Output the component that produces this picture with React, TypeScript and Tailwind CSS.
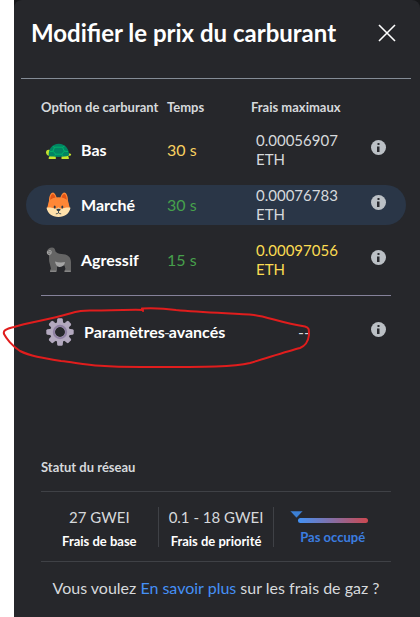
import React from 'react';

const Turtle = () => (
  <svg viewBox="0 0 26 26" className="h-[26px] w-[26px]" aria-hidden="true">
    <path d="M4 13C1.5 12 0 13.5 0 15.5c0 2.5 2 3.5 5 3.5l1-3z" fill="#c0e02f" />
    <path d="M22 16l3.2 1-.4 1.500-3.800.8z" fill="#c0e02f" />
    <path d="M3.500 18.500h6.300V22H3.300c-1 0-1-1.300 0-2zM15.500 18.500h6.500l.9 2.500c.2.6-.2 1-.9 1h-6.500z" fill="#c6e62d" />
    <path d="M2.800 19C2 12 6.500 6.700 12.800 6.700S23.500 12 23 18.500c-5 1.800-15 1.800-20.200.5z" fill="#018463" />
    <path d="M8.500 10.200h8l1.800 4-2.500 3H9.600L7 14.200zM8.500 10.200L6.800 9.500M16.500 10.200l2-1M7 14.200l-3.500.6M18.300 14.200l3.800.4M9.600 17.200l-.8 1.500M15.800 17.200l.8 1.500" fill="none" stroke="#00b36b" strokeWidth="1" />
  </svg>
);

const Fox = () => (
  <svg viewBox="0 0 26 26" className="h-[26px] w-[26px]" aria-hidden="true">
    <path d="M3 9C3 3.500 5 .5 7 .5c1.500 0 3 2.500 3.800 5.500h3.400C15 3 16.500.5 18.200.5c2 0 3.800 3 3.800 8.500l1.500 8H1.500z" fill="#ff8736" />
    <path d="M4.200 8c0-3 1.300-6 2.600-6S9.500 4.500 9.500 6zM20.800 8c0-3-1.200-6-2.600-6S15.500 4.500 15.500 6z" fill="#e45516" />
    <path d="M3 9.500C5 6.500 8 5.300 12.500 5.300S20 6.500 22 9.500l2 7H1z" fill="#ff8736" />
    <path d="M.5 15.800c3.300-.6 6.500.2 9.500 1l2.500-1.300 2.500 1.300c3-.8 6.200-1.600 9.500-1C23.500 21.500 19 25 12.500 25S1.500 21.500.5 15.800z" fill="#ffe1ab" />
    <ellipse cx="8.700" cy="15" rx="1" ry="1.500" fill="#2b3b47" />
    <ellipse cx="16.300" cy="15" rx="1" ry="1.500" fill="#2b3b47" />
    <path d="M10.500 17.200c1.300-.6 2.700-.6 4 0 .3 1-1.300 2-2 2s-2.300-1-2-2z" fill="#2b3b47" />
    <path d="M12.500 19v2M9.800 21.800c1 .1 2-.2 2.700-1 .7.800 1.700 1.100 2.700 1" fill="none" stroke="#2b3b47" strokeWidth=".8" />
  </svg>
);

const Gorilla = () => (
  <svg viewBox="0 0 26 26" className="h-[26px] w-[26px]" aria-hidden="true">
    <path d="M1 4C2 2 3.500.5 6 .5c2 0 3.200 1.500 3.500 4 1.500 1.200 3 2.500 6 2.500 6 0 9.500 3 9.500 8v10h-6.500v-1.500l1-1.500-1-3.500h-5.500l-2 1.500v3.500l-.5 1.500H4V23.500l1-2L3.300 15c-.6-3 .2-5-.5-7C1.300 7.700.1 6 1 4z" fill="#656565" />
    <path d="M1 4.500l3-1.800 1.700 1.500-.2 2.300-1.800 1.700C1.800 8.200.5 6.500 1 4.500z" fill="#a4a4a4" />
    <path d="M2 4.800h3M2.200 6.700h2" stroke="#656565" strokeWidth=".8" />
    <path d="M9 14.500c3 1.200 7 1.300 10 .6-.3 3-2.200 4.900-5 4.900s-4.500-2.500-5-5.500z" fill="#a4a4a4" />
    <path d="M4.500 23.500h5.500V25H4zM19 23.500h5.500V25h-6z" fill="#858585" />
  </svg>
);

const Gear = () => (
  <svg viewBox="-14 -14 28 28" className="h-7 w-7" aria-hidden="true">
    {[0, 45, 90, 135, 180, 225, 270, 315].map((angle) => (
      <path key={angle} transform={`rotate(${angle})`} d="M-3.200-8L-2.800-12.500q.2-1.200 1.200-1.200h3.200q1 0 1.200 1.200L3.200-8z" fill="#b3a9bf" />
    ))}
    <circle r="7.500" fill="none" stroke="#b3a9bf" strokeWidth="5" />
    <circle r="6.200" fill="none" stroke="#8f81a3" strokeWidth="2" />
  </svg>
);

const InfoButton = ({ label }: { label: string }) => (
  <button type="button" aria-label={label} className="block">
    <svg viewBox="0 0 16 16" className="h-4 w-4">
      <circle cx="7.500" cy="7.500" r="7.500" fill="#bbc0c5" />
      <path d="M6.500 3h2v2h-2zM6 6.500h2.500v5.500H6z" fill="#292a2f" />
    </svg>
  </button>
);

const options = [
  { name: 'Bas', icon: <Turtle />, time: '30 s', fee: '0.00056907', timeColor: 'text-[#f8d060]', feeColor: 'text-[#d6d9dc]', rowColor: '' },
  { name: 'Marché', icon: <Fox />, time: '30 s', fee: '0.00076783', timeColor: 'text-[#46a04c]', feeColor: 'text-[#d6d9dc]', rowColor: 'bg-[#2a3647]' },
  { name: 'Agressif', icon: <Gorilla />, time: '15 s', fee: '0.00097056', timeColor: 'text-[#46a04c]', feeColor: 'text-[#fbdc52]', rowColor: '' },
];

const App = () => {
  return (
    <div className="relative min-h-screen bg-white pl-[14px] font-['Lato','Open_Sans',sans-serif] text-base text-[#d6d9dc]">
      <div className="bg-[#17181a]">
        <main className="min-h-screen rounded-t-lg bg-[#26272b]">
          <header className="mr-[9px] ml-[7px] flex h-[79px] items-start justify-between border-b border-[#848c96] pt-[18px] pr-[14px] pl-[10px]">
            <h1 className="text-2xl leading-[30px] font-bold whitespace-nowrap text-white">Modifier le prix du carburant</h1>
            <button type="button" aria-label="Fermer" className="pt-[5px]">
              <svg viewBox="0 0 20 20" className="h-5 w-5">
                <path d="M2 2l16 16M18 2L2 18" stroke="#fff" strokeWidth="1.600" />
              </svg>
            </button>
          </header>

          <section className="mr-[14px] ml-3">
            <table className="w-full table-fixed border-collapse text-left">
              <colgroup>
                <col className="w-[141px]" />
                <col className="w-[84px]" />
                <col />
                <col className="w-[35px]" />
              </colgroup>
              <thead>
                <tr className="h-[51px] text-[13px] leading-4 whitespace-nowrap">
                  <th className="pt-1 pl-[15px] font-bold">Option de carburant</th>
                  <th className="pt-1 font-bold">Temps</th>
                  <th className="pt-1 font-bold">Frais maximaux</th>
                  <td />
                </tr>
              </thead>
              <tbody>
                {options.map((option) => (
                  <React.Fragment key={option.name}>
                    <tr className={`h-10 ${option.rowColor}`.trim()} style={{ clipPath: 'inset(0 round 20px)' }}>
                      <td className="pl-5">
                        <button type="button" className="flex items-center gap-[9px] font-bold text-white">
                          {option.icon}
                          {option.name}
                        </button>
                      </td>
                      <td className={option.timeColor}>{option.time}</td>
                      <td className={`pl-[5px] text-[15px] leading-[19px] ${option.feeColor}`}>
                        {option.fee}
                        <br />
                        ETH
                      </td>
                      <td className="pb-1">
                        <InfoButton label={`Informations : ${option.name}`} />
                      </td>
                    </tr>
                    <tr className="h-[15px]" aria-hidden="true" />
                  </React.Fragment>
                ))}
              </tbody>
            </table>
          </section>

          <section className="mr-[29px] ml-[27px] flex h-[72px] items-center border-t border-[#85829a] pl-[5px]">
            <button type="button" className="flex w-[118px] items-center gap-[10px] font-bold whitespace-nowrap text-white">
              <span className="shrink-0"><Gear /></span>
              <span>Paramètres avancés</span>
            </button>
            <span>-</span>
            <span className="ml-[128px]">--</span>
            <span className="-mr-1 ml-auto pr-2 pb-1">
              <InfoButton label="Informations : Paramètres avancés" />
            </span>
          </section>

          <section className="mr-[29px] ml-[27px] pt-[92px]">
            <h2 className="text-[13px] leading-4 font-bold">Statut du réseau</h2>
            <div className="mt-4 grid h-[71px] grid-cols-3 items-center border-y border-[#3f4146] text-center">
              <div className="h-10">
                <p className="text-[15px] leading-5">27 GWEI</p>
                <p className="pt-1 text-[13px] leading-5 font-bold text-white">Frais de base</p>
              </div>
              <div className="h-10 border-x border-[#3f4146]">
                <p className="text-[15px] leading-5">0.1 - 18 GWEI</p>
                <p className="pt-1 text-[13px] leading-5 font-bold whitespace-nowrap text-white">Frais de priorité</p>
              </div>
              <div className="flex h-10 flex-col items-center text-[#3b7de0]">
                <svg viewBox="0 0 78 14" className="mr-2 mt-1 h-[14px] w-[78px]" aria-hidden="true">
                  <defs>
                    <linearGradient id="busy">
                      <stop stopColor="#4292f5" />
                      <stop offset="1" stopColor="#cc4850" />
                    </linearGradient>
                  </defs>
                  <rect x="8" y="7" width="70" height="5" rx="2.500" fill="url(#busy)" />
                  <path d="M0 0h13L6.500 7z" fill="#3b7fd4" stroke="#26272b" strokeWidth=".5" />
                </svg>
                <p className="pt-[2px] text-[13px] leading-5 font-bold">Pas occupé</p>
              </div>
            </div>
            <p className="pt-[14px] text-center leading-6 whitespace-nowrap">
              Vous voulez <a href="#gas" className="text-[#4590f6]">En savoir plus</a> sur les frais de gaz ?
            </p>
          </section>
        </main>
      </div>

      <svg viewBox="0 0 320 80" className="pointer-events-none absolute top-[300px] left-0 h-20 w-80" aria-hidden="true">
        <path
          d="M143 11L142 8.500C154 8 165 8.500 176 10C203 12.500 235 13.500 254 15C269 17 281 23 305 26.500C309 27.500 309 29 309 35C308 43 305 46 300 48C288 51 270 57 250 63C234 67 211 67 141 67C94 67 86 64 61 61C42 58 30 56 20 51C12 46 6 38 4 34C3 31 5 29 14 27C29 22 49 20 68 14C78 11 83 10 95 10.500C117 11 132 9 143 10"
          fill="none"
          stroke="#e01d1d"
          strokeWidth="2"
          strokeLinecap="round"
          strokeLinejoin="round"
        />
      </svg>
    </div>
  );
};

export default App;
